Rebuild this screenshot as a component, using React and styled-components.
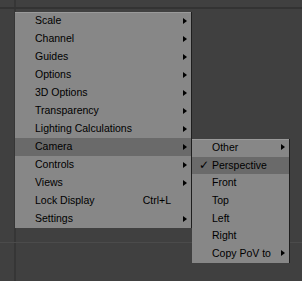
import React from "react";
import styled, { createGlobalStyle } from "styled-components";

const GlobalStyle = createGlobalStyle`
  html, body {
    margin: 0;
    padding: 0;
    background: #404040;
  }
  body {
    font-family: "Liberation Sans", Arial, sans-serif;
  }
`;

const Viewport = styled.div`
  position: relative;
  width: 302px;
  height: 281px;
  overflow: hidden;
  background-color: #404040;
  background-image:
    linear-gradient(to bottom, transparent 7px, #333333 7px, #333333 9px, transparent 9px),
    linear-gradient(to bottom, transparent 242px, #4b4b4b 242px, #4b4b4b 243px, transparent 243px),
    linear-gradient(to right, transparent 14px, #363636 14px, #363636 16px, transparent 16px);
  padding: 12px 0 0 15px;
  box-sizing: border-box;
`;

const Menu = styled.ul`
  list-style: none;
  margin: 0;
  padding: 0;
  width: ${(p) => p.$width}px;
  background: #878787;
  box-shadow: inset 0 1px 0 #9a9a9a;
  border-right: 1px solid #1e1e1e;
  box-sizing: border-box;
`;

const SubMenu = styled(Menu)`
  position: absolute;
  left: 192px;
  top: 139px;
`;

const Item = styled.li`
  position: relative;
  display: flex;
  align-items: center;
  height: ${(p) => p.$h}px;
  padding: 0 0 2px 20px;
  box-sizing: border-box;
  font-size: 10.5px;
  color: #000;
  background: ${(p) => (p.$active ? "#6a6a6a" : "transparent")};
`;

const Label = styled.span`
  flex: 1;
  white-space: nowrap;
`;

const Check = styled.span`
  position: absolute;
  left: 7px;
  top: 1px;
  font-size: 12px;
  font-family: "DejaVu Sans", sans-serif;
`;

const Shortcut = styled.span`
  margin-right: 20px;
  white-space: nowrap;
`;

const Arrow = styled.span`
  width: 0;
  height: 0;
  margin: 1px 4px 0 0;
  border-left: 4px solid #000;
  border-top: 3.5px solid transparent;
  border-bottom: 3.5px solid transparent;
`;

const mainItems = [
  { label: "Scale", sub: true },
  { label: "Channel", sub: true },
  { label: "Guides", sub: true },
  { label: "Options", sub: true },
  { label: "3D Options", sub: true },
  { label: "Transparency", sub: true },
  { label: "Lighting Calculations", sub: true },
  { label: "Camera", sub: true, active: true },
  { label: "Controls", sub: true },
  { label: "Views", sub: true },
  { label: "Lock Display", shortcut: "Ctrl+L" },
  { label: "Settings", sub: true },
];

const cameraItems = [
  { label: "Other", sub: true },
  { label: "Perspective", checked: true, active: true },
  { label: "Front" },
  { label: "Top" },
  { label: "Left" },
  { label: "Right" },
  { label: "Copy PoV to", sub: true },
];

function MenuRow({ item, h }) {
  return (
    <Item $active={item.active} $h={h}>
      {item.checked && <Check>✓</Check>}
      <Label>{item.label}</Label>
      {item.shortcut && <Shortcut>{item.shortcut}</Shortcut>}
      {item.sub && <Arrow />}
    </Item>
  );
}

export default function App() {
  return (
    <>
      <GlobalStyle />
      <Viewport>
        <Menu $width={177}>
          {mainItems.map((item) => (
            <MenuRow key={item.label} item={item} h={18} />
          ))}
        </Menu>
        <SubMenu $width={98}>
          {cameraItems.map((item) => (
            <MenuRow key={item.label} item={item} h={17.7} />
          ))}
        </SubMenu>
      </Viewport>
    </>
  );
}
